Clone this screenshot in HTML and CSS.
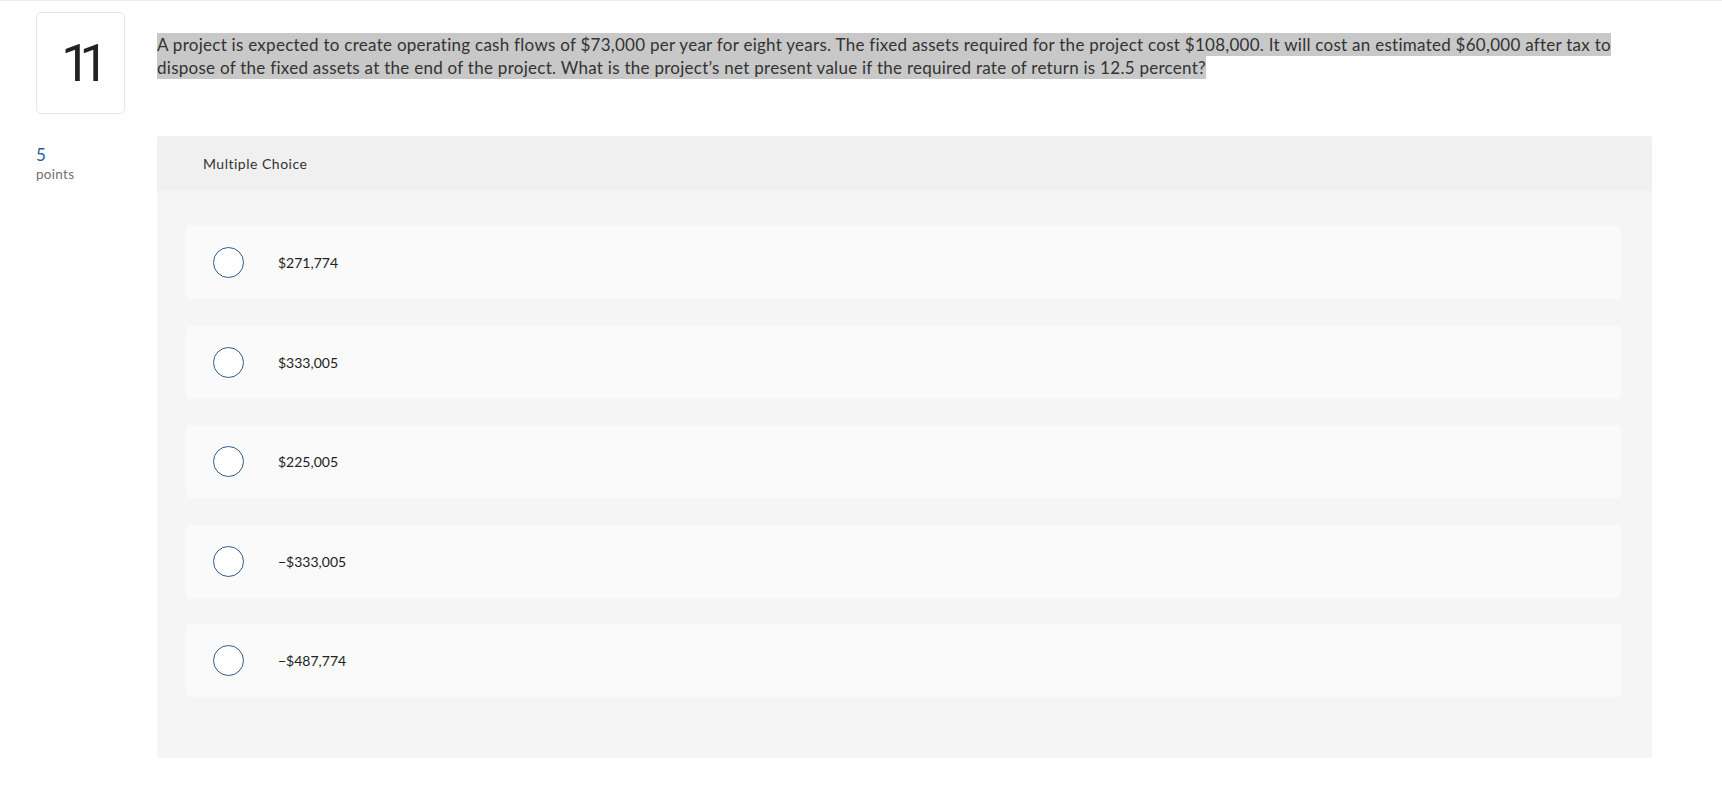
FILE: index.html
```html
<!DOCTYPE html>
<html lang="en">
<head>
<meta charset="utf-8">
<title>Question 11</title>
<link rel="stylesheet" href="styles.css">
</head>
<body>
<div class="topline"></div>
<main class="question">
  <div class="qnum"><span class="qnum-text">11</span></div>
  <div class="prompt"><span class="hl">A project is expected to create operating cash flows of $73,000 per year for eight years. The fixed assets required for the project cost $108,000. It will cost an estimated $60,000 after tax to dispose of the fixed assets at the end of the project. What is the project’s net present value if the required rate of return is 12.5 percent?</span></div>
  <div class="points">
    <div class="points-num">5</div>
    <div class="points-label">points</div>
  </div>
  <section class="panel">
    <header class="panel-head">Multiple Choice</header>
    <div class="panel-body">
      <label class="option"><span class="radio"></span><span class="opt-text">$271,774</span></label>
      <label class="option"><span class="radio"></span><span class="opt-text">$333,005</span></label>
      <label class="option"><span class="radio"></span><span class="opt-text">$225,005</span></label>
      <label class="option"><span class="radio"></span><span class="opt-text">−$333,005</span></label>
      <label class="option"><span class="radio"></span><span class="opt-text">−$487,774</span></label>
    </div>
  </section>
</main>
</body>
</html>
```
FILE: styles.css
```css
* { box-sizing: border-box; }
html, body {
  margin: 0;
  padding: 0;
  background: #fff;
  font-family: Lato, "Open Sans", "Liberation Sans", sans-serif;
  color: #333;
}
.topline {
  height: 1px;
  background: #ececec;
}
.question {
  display: grid;
  grid-template-columns: 89px 1495px;
  column-gap: 32px;
  row-gap: 22px;
  padding: 11px 0 0 36px;
}
.qnum {
  height: 102px;
  border: 1px solid #e6e6e6;
  border-radius: 5px;
  display: flex;
  align-items: center;
  justify-content: center;
  font-family: Roboto, "Liberation Sans", sans-serif;
  font-weight: 400;
  font-size: 52px;
  color: #222;
}
.qnum-text {
  letter-spacing: -11px;
  margin-right: 2px;
}
.prompt {
  padding-top: 22px;
  font-size: 17px;
  line-height: 22.5px;
  letter-spacing: 0.27px;
  color: #333;
}
.hl {
  background: #c8c8c8;
  padding: 1px 0;
}
.points {
  padding-top: 9px;
}
.points-num {
  font-size: 17px;
  line-height: 20px;
  color: #1d5d9b;
}
.points-label {
  font-size: 13.5px;
  line-height: 18px;
  letter-spacing: 0.3px;
  color: #707070;
}
.panel {
  background: #f5f5f5;
  border-radius: 3px;
  overflow: hidden;
}
.panel-head {
  height: 55px;
  background: #f0f0f0;
  display: flex;
  align-items: center;
  padding-left: 46px;
  font-size: 14px;
  letter-spacing: 0.5px;
  color: #333;
}
.panel-body {
  display: flex;
  flex-direction: column;
  gap: 26.5px;
  padding: 35px 31px 61px 29px;
}
.option {
  height: 73px;
  background: #fafafa;
  border-radius: 4px;
  display: flex;
  align-items: center;
  padding-left: 27px;
  gap: 34px;
}
.radio {
  width: 31px;
  height: 31px;
  border: 1.4px solid #2b5c8f;
  border-radius: 50%;
  background: #fff;
  flex: none;
}
.opt-text {
  font-size: 14px;
  color: #222;
}
```
